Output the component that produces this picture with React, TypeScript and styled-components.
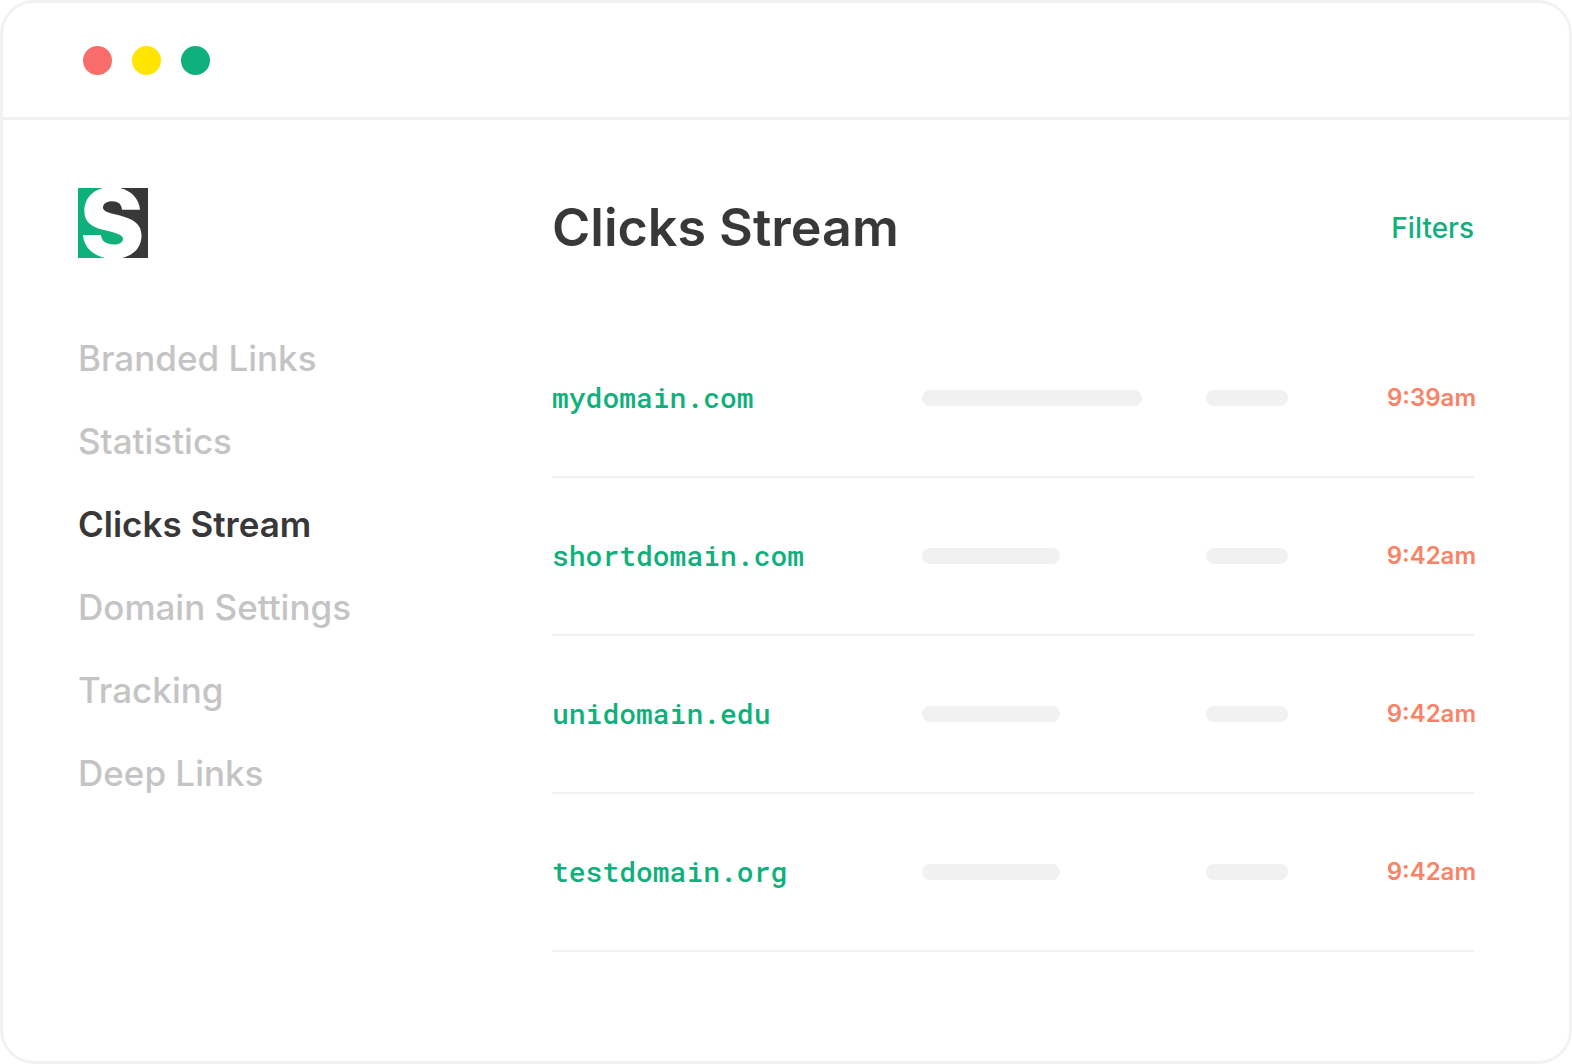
import React from "react";
import styled, { createGlobalStyle } from "styled-components";

const colors = {
  line: "#f2f2f2",
  bar: "#f1f1f1",
  green: "#10b07c",
  ink: "#383838",
  muted: "#c4c4c4",
  coral: "#fa8266",
};

const GlobalStyle = createGlobalStyle`
  *, *::before, *::after { box-sizing: border-box; }
  body {
    margin: 0;
    background: #fff;
    font-family: Inter, "Liberation Sans", sans-serif;
    color: ${colors.ink};
  }
`;

const Window = styled.div`
  display: flex;
  flex-direction: column;
  min-height: 100vh;
  border: 3px solid ${colors.line};
  border-radius: 34px;
  background: #fff;
`;

const TitleBar = styled.header`
  display: flex;
  align-items: center;
  gap: 20px;
  height: 117px;
  padding: 0 80px;
  border-bottom: 3px solid ${colors.line};
`;

const Dot = styled.span<{ $color: string }>`
  width: 29px;
  height: 29px;
  border-radius: 50%;
  background: ${(p) => p.$color};
`;

const Body = styled.div`
  display: flex;
  flex: 1;
  padding: 68px 95px 68px 75px;
`;

const Sidebar = styled.aside`
  flex: 0 0 474px;
`;

const Logo = styled.svg`
  display: block;
  width: 70px;
  height: 70px;
`;

const NavList = styled.ul`
  display: flex;
  flex-direction: column;
  gap: 43px;
  margin: 80px 0 0;
  padding: 0;
  list-style: none;
`;

const NavLink = styled.a<{ $active?: boolean }>`
  display: block;
  font-size: 35px;
  line-height: 40px;
  font-weight: ${(p) => (p.$active ? 600 : 500)};
  color: ${(p) => (p.$active ? colors.ink : colors.muted)};
  text-decoration: none;
`;

const Main = styled.main`
  flex: 1;
  min-width: 0;
`;

const Heading = styled.div`
  display: flex;
  align-items: center;
  justify-content: space-between;
  height: 80px;
  margin-bottom: 52px;
`;

const Title = styled.h1`
  margin: 0;
  font-size: 52px;
  line-height: 64px;
  font-weight: 600;
`;

const FilterButton = styled.button`
  padding: 0;
  border: 0;
  background: none;
  font: 500 28px/40px Inter, "Liberation Sans", sans-serif;
  color: ${colors.green};
  cursor: pointer;
`;

const Table = styled.table`
  width: 100%;
  table-layout: fixed;
  border-collapse: separate;
  border-spacing: 0;
`;

const Cell = styled.td<{ $width?: string }>`
  width: ${(p) => p.$width ?? "auto"};
  height: 158px;
  padding: 0;
  border-bottom: 2px solid ${colors.bar};
  vertical-align: middle;
`;

const Domain = styled.a`
  font: 500 28px/40px "Roboto Mono", "DejaVu Sans Mono", monospace;
  color: ${colors.green};
  text-decoration: none;
`;

const Bar = styled.div<{ $width: number }>`
  width: ${(p) => p.$width}px;
  height: 16px;
  border-radius: 8px;
  background: ${colors.bar};
`;

const Time = styled.time`
  display: block;
  margin-right: -2px;
  font-size: 24px;
  line-height: 40px;
  font-weight: 600;
  text-align: right;
  color: ${colors.coral};
`;

const sections = [
  "Branded Links",
  "Statistics",
  "Clicks Stream",
  "Domain Settings",
  "Tracking",
  "Deep Links",
];

const clicks = [
  { domain: "mydomain.com", bar: 220, time: "9:39am" },
  { domain: "shortdomain.com", bar: 138, time: "9:42am" },
  { domain: "unidomain.edu", bar: 138, time: "9:42am" },
  { domain: "testdomain.org", bar: 138, time: "9:42am" },
];

export default function App() {
  return (
    <>
      <GlobalStyle />
      <Window>
        <TitleBar>
          <Dot $color="#f86c6b" />
          <Dot $color="#ffe500" />
          <Dot $color={colors.green} />
        </TitleBar>
        <Body>
          <Sidebar>
            <Logo viewBox="0 0 70 70" aria-hidden="true">
              <path
                fill={colors.green}
                d="M0 0H25C13 3 6.300 12 6.300 23C6.300 34 14 39.500 26 42C38 44.500 45 47 45 51C45 54.500 41 56.500 36 56.500C28 56.500 23.500 53 23 47H5C5.500 58 14 67 27 70H0Z"
              />
              <path
                fill={colors.ink}
                d="M42 0H70V70H44C56 67 63.500 59.500 63.500 47.500C63.500 36 55 31 42 27.500C31 25 25 23.500 25 19.500C25 15.500 29 13.200 34 13.200C40 13.200 43.500 16 44 21.700H62C61 11 54 3 42 0Z"
              />
            </Logo>
            <nav>
              <NavList>
                {sections.map((name) => (
                  <li key={name}>
                    <NavLink href="#" $active={name === "Clicks Stream"}>
                      {name}
                    </NavLink>
                  </li>
                ))}
              </NavList>
            </nav>
          </Sidebar>
          <Main>
            <Heading>
              <Title>Clicks Stream</Title>
              <FilterButton type="button">Filters</FilterButton>
            </Heading>
            <Table>
              <tbody>
                {clicks.map((click) => (
                  <tr key={click.domain}>
                    <Cell $width="370px">
                      <Domain href="#">{click.domain}</Domain>
                    </Cell>
                    <Cell $width="284px">
                      <Bar $width={click.bar} />
                    </Cell>
                    <Cell>
                      <Bar $width={82} />
                    </Cell>
                    <Cell>
                      <Time>{click.time}</Time>
                    </Cell>
                  </tr>
                ))}
              </tbody>
            </Table>
          </Main>
        </Body>
      </Window>
    </>
  );
}
